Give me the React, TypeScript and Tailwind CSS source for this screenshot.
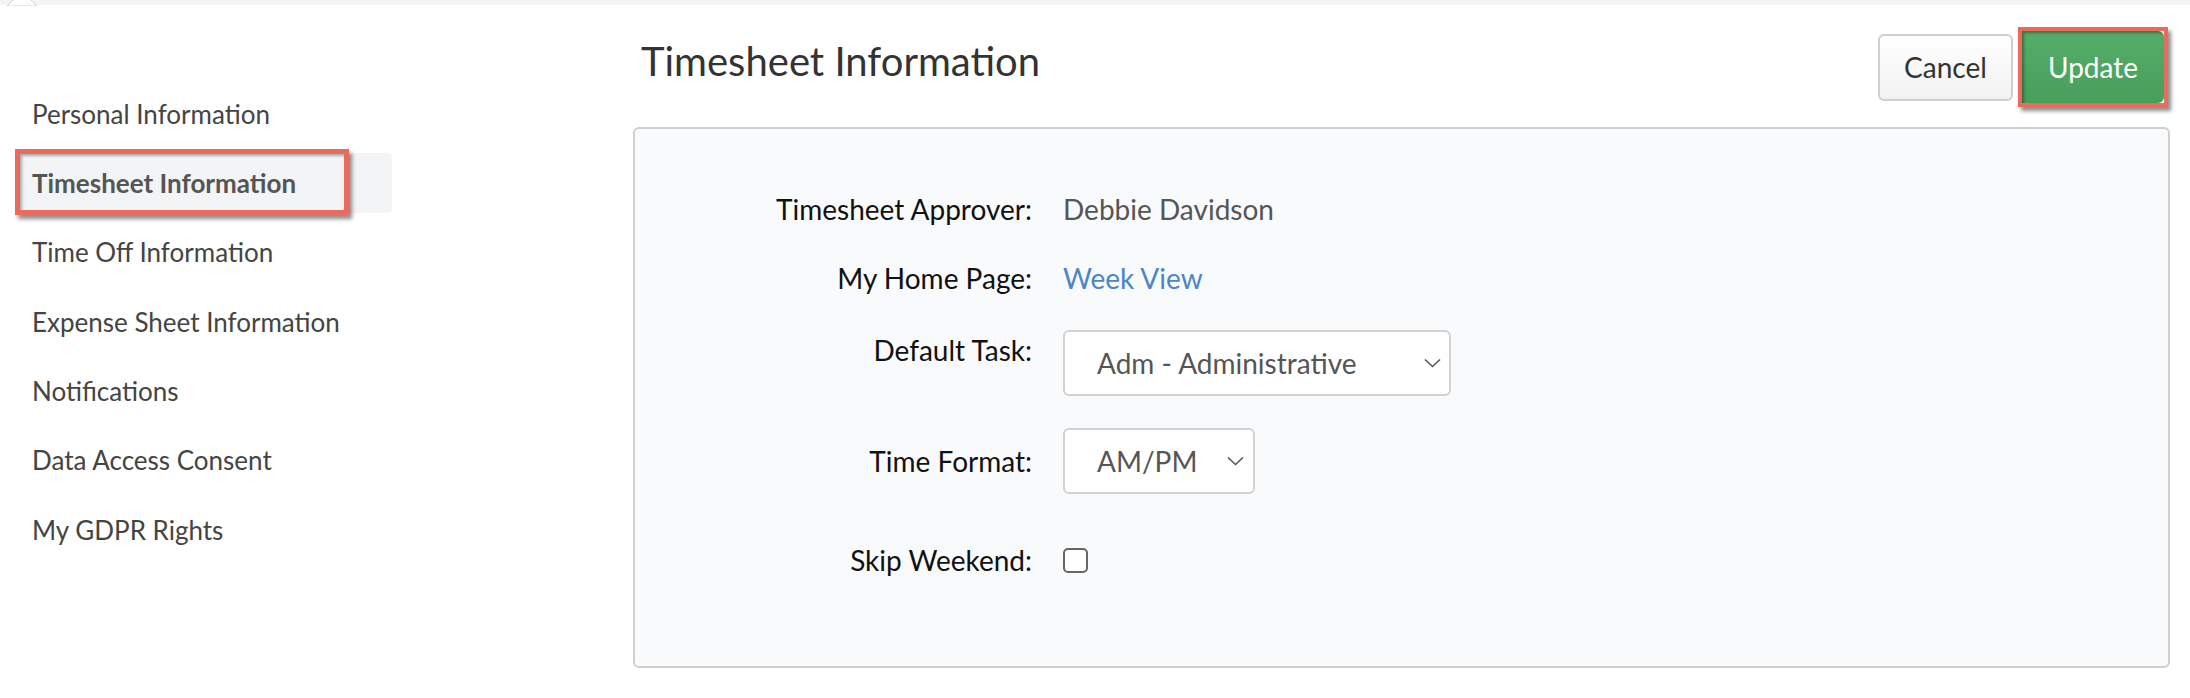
import type { ReactNode } from 'react';

const navItems = [
  'Personal Information',
  'Timesheet Information',
  'Time Off Information',
  'Expense Sheet Information',
  'Notifications',
  'Data Access Consent',
  'My GDPR Rights',
];

function Chevron() {
  return (
    <svg width="17" height="10" viewBox="0 0 17 10" fill="none" aria-hidden="true">
      <path d="M1 1.5 L8.5 8.5 L16 1.5" stroke="#555" strokeWidth="1.6" />
    </svg>
  );
}

function FakeSelect({ value, width, padRight }: { value: string; width: string; padRight: string }) {
  return (
    <div
      className={`flex h-[66px] items-center justify-between rounded-[6px] border-2 border-[#d2d2d2] bg-white pl-[32px] text-[28px] text-[#555] ${width} ${padRight}`}
    >
      <span>{value}</span>
      <Chevron />
    </div>
  );
}

function Row({ label, children, className }: { label: string; children: ReactNode; className: string }) {
  return (
    <div className={`flex gap-[31px] ${className}`}>
      <div className="w-[397px] shrink-0 text-right text-[28px] leading-[40px] text-[#111]">{label}</div>
      {children}
    </div>
  );
}

export default function App() {
  return (
    <div className="relative min-h-screen bg-white font-['Lato','Liberation_Sans',sans-serif]">
      {/* top strip with the tip of a dropdown arrow */}
      <div className="h-[5px] bg-[#f3f4f6]" />
      <svg className="absolute left-[6px] top-0" width="32" height="6" viewBox="0 0 32 6" aria-hidden="true">
        <polygon points="1,6 16,-9 31,6" fill="#fff" stroke="#cfcfcf" strokeWidth="1" />
      </svg>

      <div className="flex">
        {/* side menu */}
        <nav className="ml-[15px] flex w-[377px] shrink-0 flex-col gap-[9.4px] pt-[79px]">
          {navItems.map((item) => {
            const active = item === 'Timesheet Information';
            return (
              <div
                key={item}
                className={
                  active
                    ? 'relative flex h-[60px] items-center rounded-[5px] bg-[#f3f4f6] pl-[17px] text-[26px] font-bold text-[#555]'
                    : 'flex h-[60px] items-center pl-[17px] text-[26px] text-[#444]'
                }
              >
                {item}
                {active && (
                  <span className="pointer-events-none absolute left-0 top-[-4px] h-[66px] w-[334px] border-[5px] border-[#ea6a5b] shadow-[3px_4px_4px_rgba(0,0,0,0.45),inset_2px_2px_3px_rgba(0,0,0,0.3)]" />
                )}
              </div>
            );
          })}
        </nav>

        {/* main content */}
        <main className="ml-[241px] mr-[20px] flex-1">
          <div className="flex h-[122px] items-start justify-between">
            <h1 className="ml-[8px] mt-[36px] text-[40px] font-normal leading-[40px] text-[#333]">
              Timesheet Information
            </h1>
            <div className="mr-[2px] mt-[22px] flex items-center gap-[5px]">
              <button className="h-[67px] w-[135px] rounded-[6px] border-2 border-[#cfcfcf] bg-gradient-to-b from-white to-[#f2f2f2] text-[28px] text-[#333]">
                Cancel
              </button>
              <div className="border-[4px] border-[#ea6a5b] shadow-[3px_4px_4px_rgba(0,0,0,0.45)]">
                <button className="block h-[72px] w-[142px] rounded-r-[6px] bg-gradient-to-b from-[#55ad6a] to-[#479f5b] text-[28px] text-white shadow-[inset_2px_2px_3px_rgba(0,0,0,0.35)]">
                  Update
                </button>
              </div>
            </div>
          </div>

          <section className="h-[541px] rounded-[6px] border-2 border-[#cfcfcf] bg-[#f9fafc] pt-[60px]">
            <Row label="Timesheet Approver:" className="h-[40px] items-center">
              <span className="text-[28px] text-[#555]">Debbie Davidson</span>
            </Row>
            <Row label="My Home Page:" className="mt-[29px] h-[40px] items-center">
              <span className="text-[28px] text-[#4a86c8]">Week View</span>
            </Row>
            <Row label="Default Task:" className="mt-[32px] items-start">
              <FakeSelect value="Adm - Administrative" width="w-[388px]" padRight="pr-[8px]" />
            </Row>
            <Row label="Time Format:" className="mt-[32px] items-center">
              <FakeSelect value="AM/PM" width="w-[192px]" padRight="pr-[9px]" />
            </Row>
            <Row label="Skip Weekend:" className="mt-[46px] h-[40px] items-center">
              <div className="h-[25px] w-[25px] rounded-[5px] border-2 border-[#666] bg-white" />
            </Row>
          </section>
        </main>
      </div>
    </div>
  );
}
